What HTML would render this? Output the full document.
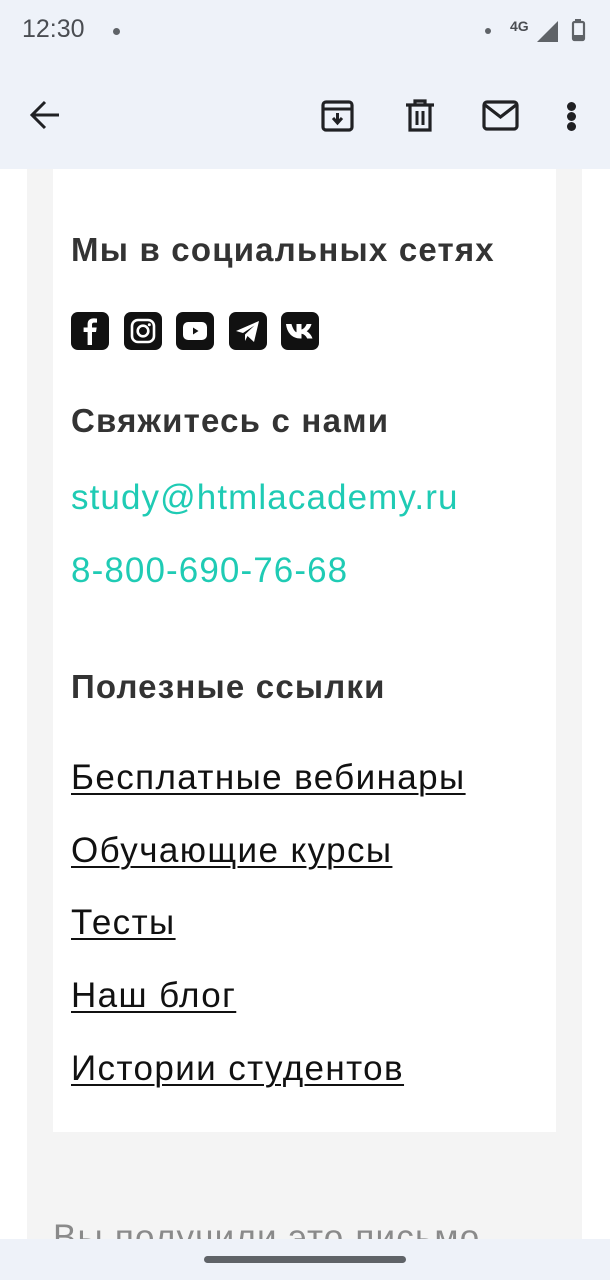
<!DOCTYPE html>
<html><head><meta charset="utf-8">
<style>
*{margin:0;padding:0;box-sizing:border-box}
body{width:610px;height:1280px;overflow:hidden;background:#fff;font-family:"Liberation Sans",Roboto,Arial,sans-serif;position:relative}
.hdr{position:absolute;left:0;top:0;width:610px;height:169px;background:#eef2f9}
.col{position:absolute;left:27px;top:169px;width:555px;height:1111px;background:#f4f4f4}
.card{position:absolute;left:53px;top:169px;width:503px;height:963px;background:#fff}
.t{position:absolute;left:71px;white-space:nowrap}
.h{font-weight:bold;font-size:33px;color:#333;letter-spacing:1.2px}
.g{font-size:35px;color:#1fcbb4;letter-spacing:1.1px}
.l{font-size:35px;color:#111;letter-spacing:1.4px;text-decoration:underline;text-decoration-thickness:2px;text-underline-offset:4px}
.ic{position:absolute;top:312px;width:38px;height:38px;background:#111;border-radius:7px}
.ic svg{width:38px;height:38px;display:block}
.nav{position:absolute;left:0;top:1239px;width:610px;height:41px;background:#eef2f9}
.bar{position:absolute;left:204px;top:1256px;width:202px;height:7px;border-radius:4px;background:#5f6368}
</style></head><body>
<div class="hdr">
  <div style="position:absolute;left:22px;top:15px;font-size:25px;color:#4a4d52">12:30</div>
  <div style="position:absolute;left:113px;top:28px;width:7px;height:7px;border-radius:50%;background:#5f6368"></div>
  <div style="position:absolute;left:485px;top:28px;width:6px;height:6px;border-radius:50%;background:#5f6368"></div>
  <div style="position:absolute;left:510px;top:18px;font-size:14px;font-weight:bold;color:#4a4d52">4G</div>
  <svg style="position:absolute;left:537px;top:21px" width="22" height="22" viewBox="0 0 22 22"><path d="M21 0V21H0Z" fill="#5f6368"/></svg>
  <svg style="position:absolute;left:571px;top:19px" width="16" height="24" viewBox="0 0 16 24"><rect x="4" y="0" width="6" height="3" fill="#5f6368"/><rect x="2" y="3" width="11" height="18" rx="1.5" fill="none" stroke="#5f6368" stroke-width="2.2"/><rect x="2" y="16" width="11" height="5" fill="#5f6368"/></svg>
  <svg style="position:absolute;left:28px;top:99px" width="34" height="32" viewBox="0 0 34 32"><path d="M31 16H5M17 3L4 16L17 29" fill="none" stroke="#202124" stroke-width="3"/></svg>
  <svg style="position:absolute;left:320px;top:99px" width="36" height="34" viewBox="0 0 36 34"><rect x="3" y="3" width="29" height="28" rx="3" fill="none" stroke="#202124" stroke-width="3.2"/><path d="M3 10H32" stroke="#202124" stroke-width="3"/><path d="M17.5 14V23M13 19L17.5 24L22 19" fill="none" stroke="#202124" stroke-width="3"/></svg>
  <svg style="position:absolute;left:404px;top:99px" width="32" height="34" viewBox="0 0 32 34"><path d="M2 6H30M11 6V2H21V6" fill="none" stroke="#202124" stroke-width="3.2"/><path d="M6 7V31H26V7" fill="none" stroke="#202124" stroke-width="3.2"/><path d="M13 12V26M19 12V26" stroke="#202124" stroke-width="3"/></svg>
  <svg style="position:absolute;left:482px;top:100px" width="38" height="32" viewBox="0 0 38 32"><rect x="2" y="2" width="33" height="27" rx="3" fill="none" stroke="#202124" stroke-width="3.2"/><path d="M3 5L18.5 17L34 5" fill="none" stroke="#202124" stroke-width="3.2"/></svg>
  <div style="position:absolute;left:567px;top:102px;width:9px;height:9px;border-radius:50%;background:#202124"></div>
  <div style="position:absolute;left:567px;top:112px;width:9px;height:9px;border-radius:50%;background:#202124"></div>
  <div style="position:absolute;left:567px;top:122px;width:9px;height:9px;border-radius:50%;background:#202124"></div>
</div>
<div class="col"></div>
<div class="card"></div>

<div class="t h" style="top:231px">Мы в социальных сетях</div>
<div class="ic" style="left:71px"><svg viewBox="0 0 38 38"><path d="M21 33V20H25L25.7 15.5H21V12.8C21 11.5 21.5 10.6 23.3 10.6H26V6.6C25.4 6.5 24 6.4 22.4 6.4C19 6.4 16.6 8.4 16.6 12.2V15.5H12.6V20H16.6V33Z" fill="#fff"/></svg></div>
<div class="ic" style="left:124px"><svg viewBox="0 0 38 38"><rect x="8" y="8" width="22" height="22" rx="6" fill="none" stroke="#fff" stroke-width="2.6"/><circle cx="19" cy="19" r="5.3" fill="none" stroke="#fff" stroke-width="2.6"/><circle cx="25.3" cy="12.7" r="1.5" fill="#fff"/></svg></div>
<div class="ic" style="left:176px"><svg viewBox="0 0 38 38"><rect x="7" y="10" width="24" height="18" rx="5" fill="#fff"/><path d="M17 15.5V22.5L22.5 19Z" fill="#111"/></svg></div>
<div class="ic" style="left:229px"><svg viewBox="0 0 38 38"><path d="M7 19L30 9L25 30L18.5 24L16 29L16 22.5L25.5 13.5L14 21Z" fill="#fff"/></svg></div>
<div class="ic" style="left:281px"><svg viewBox="0 0 38 38"><path d="M5 12H10.5C11.5 16 13.5 19.5 15.5 20.3V12H20.5V17.5C22.5 17.2 24.8 14.5 25.6 12H30.5C29.8 15.2 27.5 18 25.7 19.3C27.5 20.3 30.3 22.8 31.5 26.5H26.2C25.1 24 23 22 20.5 21.7V26.5H19.5C11 26.5 6 20.5 5 12Z" fill="#fff"/></svg></div>

<div class="t h" style="top:402px">Свяжитесь с нами</div>
<div class="t g" style="top:478px">study@htmlacademy.ru</div>
<div class="t g" style="top:551px">8-800-690-76-68</div>

<div class="t h" style="top:668px">Полезные ссылки</div>
<div class="t l" style="top:758px">Бесплатные вебинары</div>
<div class="t l" style="top:831px">Обучающие курсы</div>
<div class="t l" style="top:903px">Тесты</div>
<div class="t l" style="top:976px">Наш блог</div>
<div class="t l" style="top:1049px">Истории студентов</div>

<div class="t" style="left:53px;top:1218px;font-size:35px;letter-spacing:1.2px;color:#8a8a8a">Вы получили это письмо</div>
<div class="nav"></div>
<div class="bar"></div>
</body></html>
